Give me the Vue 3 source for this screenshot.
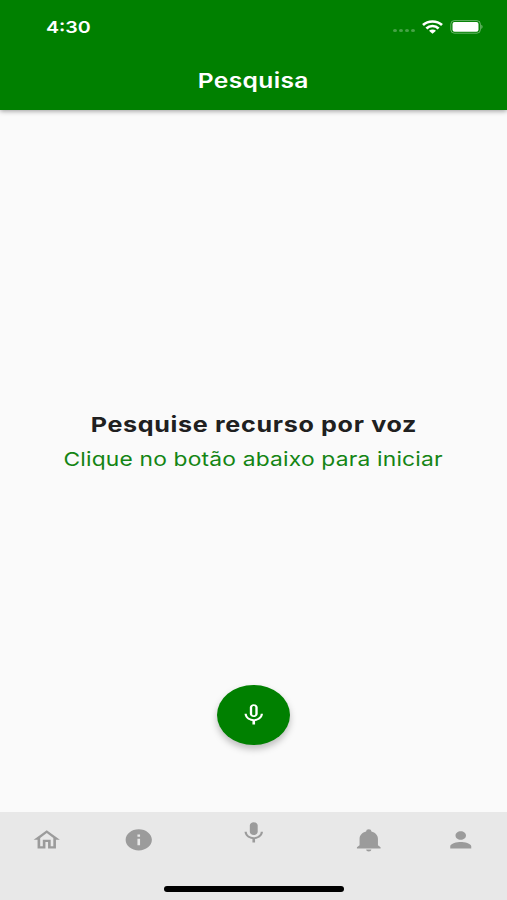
<script setup>
const tabs = [
  { name: 'home', path: 'M12 5.69l5 4.5V18h-2v-6H9v6H7v-7.81l5-4.5M12 3L2 12h3v8h6v-6h2v6h6v-8h3L12 3z' },
  { name: 'info', path: 'M12 2C6.48 2 2 6.48 2 12s4.48 10 10 10 10-4.48 10-10S17.52 2 12 2zm1 15h-2v-6h2v6zm0-8h-2V7h2v2z' },
  { name: 'mic', path: 'M12 14c1.66 0 3-1.34 3-3V5c0-1.66-1.34-3-3-3S9 3.34 9 5v6c0 1.66 1.34 3 3 3zm5.3-3c0 3-2.54 5.1-5.3 5.1S6.7 14 6.7 11H5c0 3.41 2.72 6.23 6 6.72V21h2v-3.28c3.28-.48 6-3.3 6-6.72h-1.7z' },
  { name: 'bell', path: 'M21 19v1H3v-1l2-2v-6c0-3.1 2.03-5.83 5-6.71V4a2 2 0 0 1 4 0v.29c2.97.88 5 3.61 5 6.71v6l2 2m-7 2a2 2 0 0 1-4 0' },
  { name: 'person', path: 'M12 12c2.21 0 4-1.79 4-4s-1.79-4-4-4-4 1.79-4 4 1.79 4 4 4zm0 2c-2.67 0-8 1.34-8 4v2h16v-2c0-2.66-5.33-4-8-4z' },
]
</script>

<template>
  <div class="screen">
    <header class="header">
      <div class="status">
        <span class="time">4:30</span>
        <div class="indicators">
          <span class="dots"><i v-for="n in 4" :key="n" /></span>
          <svg class="wifi" viewBox="0 0 21 14" preserveAspectRatio="none">
            <g fill="none" stroke="#fff" stroke-width="2.7">
              <path d="M1 5.1C6.2 .3 14.8 .3 20 5.1" />
              <path d="M4.4 8.4C7.8 5.2 13.2 5.2 16.6 8.4" />
            </g>
            <path d="M7 10.7C9 9 12 9 14 10.7L10.5 13.7z" fill="#fff" />
          </svg>
          <svg class="battery" viewBox="0 0 33 14">
            <rect x=".8" y=".6" width="29.6" height="12.6" rx="3.6" fill="none" stroke="#fff" stroke-opacity=".4" />
            <rect x="2.5" y="2" width="26" height="9.8" rx="2" fill="#fff" />
            <path d="M31.3 4.8c1.7.7 1.7 3.5 0 4.2z" fill="#fff" fill-opacity=".45" />
          </svg>
        </div>
      </div>
      <h1 class="title"><span>Pesquisa</span></h1>
    </header>

    <main class="content">
      <h2 class="heading"><span>Pesquise recurso por voz</span></h2>
      <p class="hint"><span>Clique no botão abaixo para iniciar</span></p>
      <button class="voice" aria-label="Iniciar">
        <svg class="icon" viewBox="0 0 24 24" preserveAspectRatio="none">
          <path d="M12 14c1.66 0 3-1.34 3-3V5c0-1.66-1.34-3-3-3S9 3.34 9 5v6c0 1.66 1.34 3 3 3zm-1.2-9.1c0-.66.54-1.2 1.2-1.2s1.2.54 1.2 1.2v6.2c0 .66-.53 1.2-1.2 1.2s-1.2-.54-1.2-1.2V4.9zm6.5 6.1c0 3-2.54 5.1-5.3 5.1S6.7 14 6.7 11H5c0 3.41 2.72 6.23 6 6.72V21h2v-3.28c3.28-.48 6-3.3 6-6.72h-1.7z" />
        </svg>
      </button>
    </main>

    <nav class="tabbar">
      <div class="tabs">
        <a v-for="tab in tabs" :key="tab.name" class="tab" :class="tab.name">
          <svg class="icon" viewBox="0 0 24 24" preserveAspectRatio="none"><path :d="tab.path" /></svg>
        </a>
      </div>
      <div class="home-indicator" />
    </nav>
  </div>
</template>

<style>
body {
  margin: 0;
}
</style>

<style scoped>
.screen {
  display: flex;
  flex-direction: column;
  width: 507px;
  height: 900px;
  overflow: hidden;
  background: #fafafa;
  font-family: Inter, sans-serif;
}
.header {
  flex: none;
  box-sizing: border-box;
  height: 110px;
  background: #008000;
  color: #fff;
  box-shadow: 0 1px 5px rgba(0, 0, 0, 0.4);
}
.status {
  display: flex;
  justify-content: space-between;
  align-items: center;
  height: 53px;
  padding: 0 24px 0 46px;
}
.time {
  font-size: 16.5px;
  font-weight: 600;
  transform: scaleX(1.19);
  transform-origin: left;
}
.indicators {
  display: flex;
  align-items: center;
}
.dots {
  display: flex;
  gap: 2px;
  margin: 8px 7px 0 0;
}
.dots i {
  width: 4px;
  height: 3px;
  border-radius: 50%;
  background: rgba(255, 255, 255, 0.28);
}
.wifi {
  width: 21px;
  height: 14px;
  margin-right: 7px;
}
.battery {
  width: 33px;
  height: 14px;
}
.title,
.heading,
.hint {
  margin: 0;
  text-align: center;
  white-space: nowrap;
}
.title span,
.heading span,
.hint span {
  display: inline-block;
}
.title {
  font-size: 20.5px;
  line-height: 56px;
  font-weight: 600;
}
.title span {
  letter-spacing: 0.3px;
  transform: scaleX(1.2);
}
.content {
  flex: 1;
  display: flex;
  flex-direction: column;
  align-items: center;
  padding-top: 297px;
}
.heading {
  font-size: 20.5px;
  line-height: 35px;
  font-weight: 700;
  color: #202020;
}
.heading span {
  padding-left: 0.6px;
  letter-spacing: 0.55px;
  transform: scaleX(1.225);
}
.hint {
  font-size: 19px;
  line-height: 36px;
  color: #148514;
}
.hint span {
  letter-spacing: 0.15px;
  transform: scaleX(1.2);
}
.voice {
  display: flex;
  align-items: center;
  justify-content: center;
  width: 73px;
  height: 60px;
  margin-top: 206.6px;
  padding: 0;
  border: 0;
  border-radius: 50%;
  background: #008000;
  color: #fff;
  box-shadow: 0 4px 7px rgba(0, 0, 0, 0.25);
}
.icon {
  display: block;
  width: 31.5px;
  height: 25.7px;
  fill: currentColor;
}
.tabbar {
  flex: none;
  height: 88.5px;
  background: #e8e8e8;
}
.tabs {
  display: grid;
  grid-template-columns: 2fr 2fr 3fr 2fr 2fr;
  height: 74px;
  color: #9b9b9b;
}
.tab {
  display: flex;
  justify-content: center;
  padding-top: 15.7px;
}
.tab.mic {
  padding-top: 8.2px;
}
.tab.home {
  padding-left: 1.4px;
}
.home-indicator {
  width: 180px;
  height: 6px;
  margin: 0 auto;
  border-radius: 3px;
  background: #000;
}
</style>
